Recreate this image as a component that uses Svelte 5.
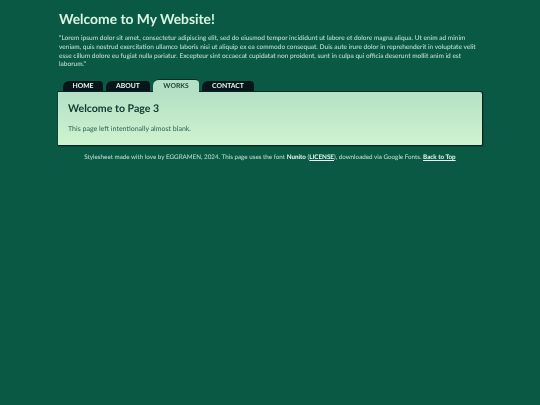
<script>
  const tabs = [
    { label: "HOME", width: 40 },
    { label: "ABOUT", width: 44 },
    { label: "WORKS", width: 46, active: true },
    { label: "CONTACT", width: 52 }
  ];
</script>

<div class="page">
  <header>
    <h1>Welcome to My Website!</h1>
    <p class="quote">"Lorem ipsum dolor sit amet, consectetur adipiscing elit, sed do eiusmod tempor incididunt ut labore et dolore magna aliqua. Ut enim ad minim veniam, quis nostrud exercitation ullamco laboris nisi ut aliquip ex ea commodo consequat. Duis aute irure dolor in reprehenderit in voluptate velit esse cillum dolore eu fugiat nulla pariatur. Excepteur sint occaecat cupidatat non proident, sunt in culpa qui officia deserunt mollit anim id est laborum."</p>
  </header>

  <nav>
    {#each tabs as tab}
      <a href="#top" class="tab" class:active={tab.active} style="width: {tab.width}px">{tab.label}</a>
    {/each}
  </nav>

  <main class="panel">
    <h2>Welcome to Page 3</h2>
    <p>This page left intentionally almost blank.</p>
  </main>

  <footer>
    Stylesheet made with love by EGGRAMEN, 2024. This page uses the font <strong>Nunito</strong> (<a href="#top">LICENSE</a>), downloaded via Google Fonts. <a href="#top">Back to Top</a>
  </footer>
</div>

<style>
  :global(body) {
    background: #0a5945;
    font-family: "Lato", "Open Sans", sans-serif;
    text-rendering: geometricPrecision;
  }

  .page {
    width: 426px;
    margin: 0 auto;
    color: #c9e8d4;
    will-change: transform;
  }

  header {
    padding: 9px 2px 0;
  }

  h1 {
    margin: 0;
    font-size: 13.85px;
    line-height: 20px;
    font-weight: 700;
    color: #d8f5e2;
  }

  .quote {
    margin: 6.4px 0 0;
    font-size: 6.55px;
    line-height: 8.6px;
  }

  nav {
    display: flex;
    gap: 3px;
    margin-top: 9.6px;
    padding-left: 6px;
    align-items: flex-end;
    height: 12px;
  }

  .tab {
    box-sizing: border-box;
    height: 10px;
    background: #08161a;
    color: #e6f7ec;
    border-radius: 6px 4px 0 0;
    font-size: 6.8px;
    font-weight: 700;
    line-height: 10px;
    text-align: center;
    text-decoration: none;
  }

  .tab.active {
    height: 13px;
    margin-bottom: -1px;
    background: #b5e0c5;
    color: #14463a;
    border-top: 1px solid #0a2a26;
    line-height: 12px;
    position: relative;
  }

  .panel {
    box-sizing: border-box;
    height: 55px;
    padding: 11px 10px 0;
    background: linear-gradient(#b5e0c5, #cff3d0);
    border: 1px solid #08261f;
    border-left-color: #0c4436;
    border-radius: 0 3px 2px 2px;
    box-shadow: 1px 1px 0 rgba(8, 38, 31, 0.35);
    color: #14463a;
  }

  h2 {
    margin: 0;
    font-size: 10.6px;
    line-height: 13px;
    font-weight: 700;
    color: #11382f;
  }

  .panel p {
    margin: 9px 0 0;
    font-size: 7px;
    line-height: 9px;
    color: #2a6452;
  }

  footer {
    margin-top: 8px;
    font-size: 6.27px;
    line-height: 8px;
    text-align: center;
    color: #c0e2cd;
  }

  footer strong {
    color: #e8f9ee;
  }

  footer a {
    color: #e8f9ee;
    font-weight: 700;
  }
</style>
